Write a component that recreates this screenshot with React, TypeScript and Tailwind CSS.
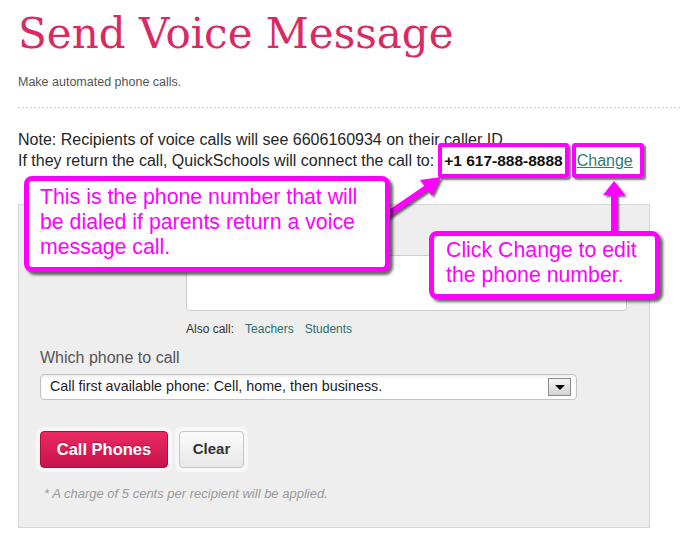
import * as React from "react";

function Callout({className, children}: {className: string; children: React.ReactNode}) {
    return (
        <div
            className={
                "absolute bg-white border-[5px] border-[#ff00ff] rounded-[8px] shadow-[3px_3px_3px_rgba(0,0,0,0.6)] text-[21.3px] leading-[25px] text-[#ff00ff] whitespace-nowrap " +
                className
            }
        >
            {children}
        </div>
    );
}

function Arrows() {
    return (
        <svg
            className="absolute inset-0 pointer-events-none drop-shadow-[2px_2px_1px_rgba(0,0,0,0.6)]"
            width={680}
            height={557}
            viewBox="0 0 680 557"
        >
            {/* diagonal arrow to phone number */}
            <line x1={384} y1={217} x2={428} y2={187} stroke="#ff00ff" strokeWidth={6} strokeLinecap="round"/>
            <polygon points="441,177 420,180 432,196" fill="#ff00ff"/>
            {/* up arrow to Change link */}
            <line x1={614} y1={233} x2={614} y2={192} stroke="#ff00ff" strokeWidth={6} strokeLinecap="round"/>
            <polygon points="614,181 603,195 625,195" fill="#ff00ff"/>
        </svg>
    );
}

export default function App() {
    return (
        <div className="relative w-[680px] h-[557px] bg-white overflow-hidden font-['Liberation_Sans',Arial,sans-serif] text-[#262626]">
            <div className="pl-[18px]">
                <h1 className="mt-[10px] h-[48px] text-[42px] leading-[48px] font-normal text-[#d92a64] font-['DejaVu_Serif',serif] whitespace-nowrap">
                    Send Voice Message
                </h1>
                <p className="mt-[16px] h-[16px] text-[12.5px] leading-[16px] text-[#555]">
                    Make automated phone calls.
                </p>
                <div className="mt-[17px] h-px bg-[repeating-linear-gradient(90deg,#cccccc_0_2px,transparent_2px_4px)]"/>

                <div className="mt-[21px] text-[16px] leading-[21px] whitespace-nowrap">
                    <div>Note: Recipients of voice calls will see 6606160934 on their caller ID.</div>
                    <div>
                        If they return the call, QuickSchools will connect the call to:
                        <span className="ml-[10px] font-bold text-[15.5px] text-[#111]">+1 617-888-8888</span>
                        <a href="#" className="ml-[14px] underline text-[#2e7d74]">Change</a>
                    </div>
                </div>

                <div className="mt-[33px] w-[632px] h-[324px] bg-[#eeeeee] border border-[#d6d6d6]">
                    <div className="mt-[50px] ml-[167px] w-[441px] h-[56px] bg-white border border-[#cccccc] rounded-[3px]"/>

                    <div className="mt-[10px] ml-[167px] h-[16px] flex items-center text-[12px] leading-[16px]">
                        <span className="text-[#333]">Also call:</span>
                        <a href="#" className="ml-[11px] text-[#2d6e69]">Teachers</a>
                        <a href="#" className="ml-[11px] text-[#2d6e69]">Students</a>
                    </div>

                    <div className="mt-[11px] ml-[21px] h-[20px] text-[16px] leading-[20px] text-[#555]">
                        Which phone to call
                    </div>

                    <div className="mt-[6px] ml-[21px] w-[537px] h-[26px] flex items-center justify-between pl-[9px] pr-[5px] bg-white border border-[#c2c2c2] rounded-[4px] shadow-[inset_0_2px_3px_rgba(0,0,0,0.07)] text-[14.3px] text-[#222]">
                        <span>Call first available phone: Cell, home, then business.</span>
                        <span className="flex items-center justify-center w-[23px] h-[18px] border border-[#8a8a8a] bg-gradient-to-b from-[#f6f6f6] to-[#d4d4d4]">
                            <span className="w-0 h-0 border-l-[5px] border-r-[5px] border-t-[5px] border-l-transparent border-r-transparent border-t-black"/>
                        </span>
                    </div>

                    <div className="mt-[27px] ml-[17px] flex gap-[3px]">
                        <div className="p-[4px] bg-[#f7f7f7] rounded-[7px]">
                            <button className="w-[128px] h-[37px] rounded-[4px] border border-[#a8103f] bg-gradient-to-b from-[#ea2a62] to-[#c6124b] text-white font-bold text-[16.5px] [text-shadow:0_-1px_0_rgba(0,0,0,0.25)]">
                                Call Phones
                            </button>
                        </div>
                        <div className="p-[4px] bg-[#f7f7f7] rounded-[7px]">
                            <button className="w-[65px] h-[37px] rounded-[4px] border border-[#c6c6c6] bg-gradient-to-b from-[#fbfbfb] to-[#e8e8e8] text-[#333] font-bold text-[15px]">
                                Clear
                            </button>
                        </div>
                    </div>

                    <div className="mt-[14px] ml-[25px] h-[16px] text-[13px] leading-[16px] italic text-[#9a9a9a]">
                        * A charge of 5 cents per recipient will be applied.
                    </div>
                </div>
            </div>

            {/* annotation overlays */}
            <Arrows/>
            <div className="absolute left-[438px] top-[143px] w-[131px] h-[35px] border-4 border-[#ff00ff] rounded-[3px] shadow-[2px_2px_2px_rgba(0,0,0,0.55)]"/>
            <div className="absolute left-[572px] top-[143px] w-[72px] h-[35px] border-4 border-[#ff00ff] rounded-[3px] shadow-[2px_2px_2px_rgba(0,0,0,0.55)]"/>
            <Callout className="left-[24px] top-[176px] w-[366px] h-[96px] pl-[11px] pt-[4px]">
                This is the phone number that will<br/>
                be dialed if parents return a voice<br/>
                message call.
            </Callout>
            <Callout className="left-[429px] top-[231px] w-[231px] h-[68px] pl-[12px] pt-[2px]">
                Click Change to edit<br/>
                the phone number.
            </Callout>
        </div>
    );
}
